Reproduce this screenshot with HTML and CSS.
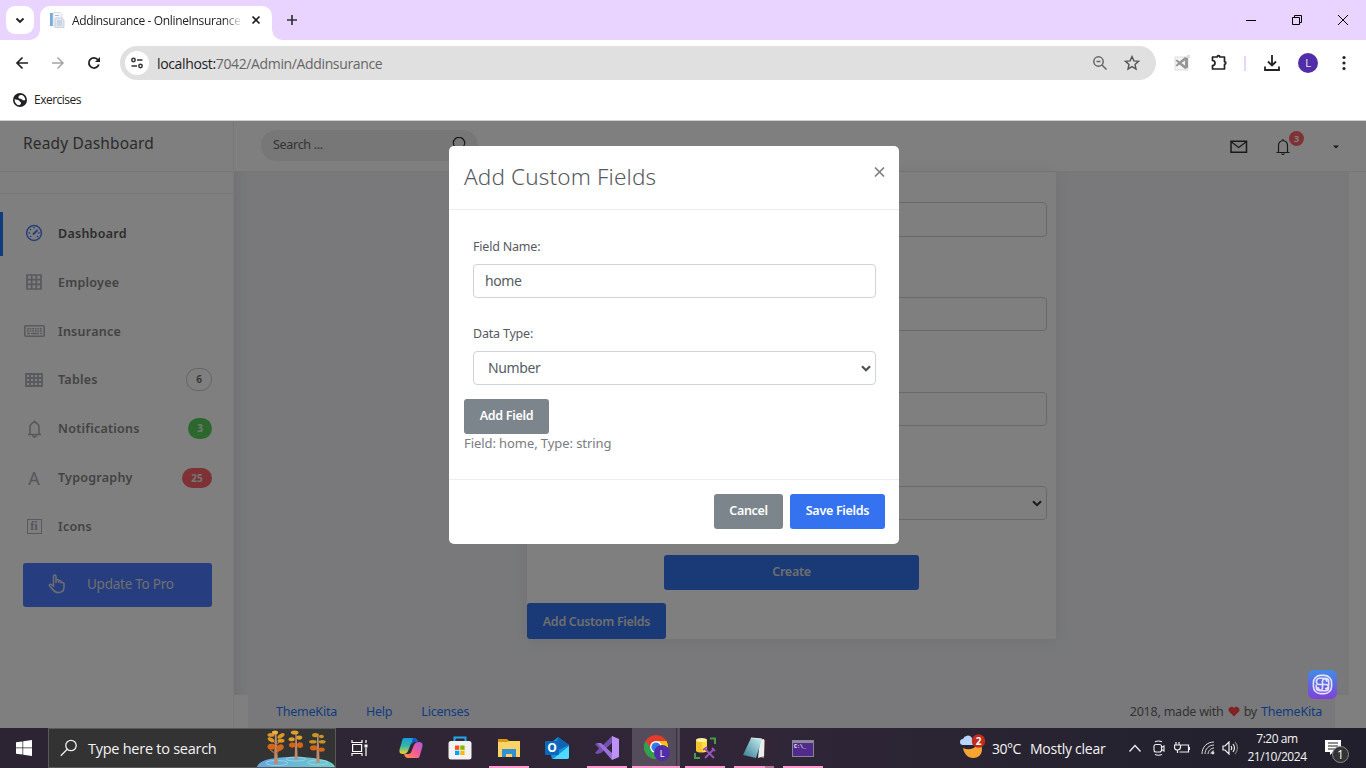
FILE: index.html
```html
<!DOCTYPE html>
<html lang="en">
<head>
<meta charset="utf-8">
<title>Addinsurance - OnlineInsurance</title>
<link rel="stylesheet" href="styles.css">
</head>
<body>
<div class="screen">
  <header class="tabstrip">
    <div class="tab-menu"><svg width="10" height="7" viewBox="0 0 10 7"><path d="M1.500 1.500 5 5l3.500-3.500" fill="none" stroke="#1f1f1f" stroke-width="1.900"/></svg></div>
    <div class="tab">
      <svg class="favicon" width="16" height="16" viewBox="0 0 16 16"><path d="M1 1h3v13H1z" fill="#73addb"/><path d="M4 .5h7l2 2V14H4z" fill="#f3f6fa" stroke="#c9d2de" stroke-width=".7"/><path d="M7 6h6l2 2v7.500H6V7z" fill="#e3e9f2" stroke="#b9c4d4" stroke-width=".7"/><path d="M8 9h5M8 11h5M8 13h5M6 3.500h4" stroke="#b4c0d0" stroke-width="1"/></svg>
      <span class="tab-title">Addinsurance - OnlineInsurance</span>
      <svg class="tab-close" width="10" height="10" viewBox="0 0 10 10"><path d="m1.500 1.500 7 7m0-7-7 7" stroke="#1f1f1f" stroke-width="1.700"/></svg>
    </div>
    <svg class="new-tab" width="12" height="12" viewBox="0 0 12 12"><path d="M6 1v10M1 6h10" stroke="#333" stroke-width="1.700"/></svg>
    <div class="window-buttons">
      <svg width="12" height="12" viewBox="0 0 12 12"><path d="M1 6.500h10" stroke="#000"/></svg>
      <svg width="12" height="12" viewBox="0 0 12 12"><path d="M1.500 3.500h7v7h-7zM3.500 3.500v-2h7v7h-2" fill="none" stroke="#000"/></svg>
      <svg width="12" height="12" viewBox="0 0 12 12"><path d="m1 1 10 10m0-10L1 11" stroke="#000"/></svg>
    </div>
  </header>

  <div class="toolbar">
    <svg class="nav-btn" width="16" height="16" viewBox="0 0 16 16"><path d="M14 8H3m5.500-5.500L3 8l5.500 5.500" fill="none" stroke="#222" stroke-width="1.700"/></svg>
    <svg class="nav-btn" width="16" height="16" viewBox="0 0 16 16"><path d="M2 8h11M7.500 2.500 13 8l-5.500 5.500" fill="none" stroke="#a5a5a5" stroke-width="1.500"/></svg>
    <svg class="nav-btn" width="16" height="16" viewBox="0 0 16 16"><path d="M12.800 9.500A5.100 5.100 0 1 1 12 4.800" fill="none" stroke="#222" stroke-width="1.800"/><path d="M14 2v5H9z" fill="#222"/></svg>
    <div class="omnibox">
      <span class="site-info"><svg width="14" height="14" viewBox="0 0 14 14" fill="none" stroke="#333" stroke-width="1.500"><circle cx="3.500" cy="4" r="1.700"/><path d="M7 4h5.500M1.500 10H7"/><circle cx="10.500" cy="10" r="1.700"/></svg></span>
      <span class="url"><b>localhost:</b>7042/Admin/Addinsurance</span>
      <svg class="zoom-icon" width="16" height="16" viewBox="0 0 16 16" fill="none" stroke="#666" stroke-width="1.500"><circle cx="6.500" cy="6.500" r="4.700"/><path d="m10 10 4.500 4.500M4.500 6.500h4"/></svg>
      <svg width="16" height="16" viewBox="0 0 16 16"><path d="m8 1.600 1.900 4.300 4.600.4-3.500 3.100 1 4.600L8 11.600 4 14l1-4.600-3.500-3.100 4.600-.4z" fill="none" stroke="#555" stroke-width="1.400"/></svg>
    </div>
    <div class="extensions">
      <svg width="16" height="16" viewBox="0 0 16 16"><path d="M1 2h13v13H1z" fill="#f4f4f4" stroke="#ddd"/><path d="M13 0h3v3h-3z" fill="#ddd"/><path d="m11 2 3 1.300v9.400L11 14 5.500 9.500 3 11.500 1.500 10.500 4 8 1.500 5.500 3 4.500l2.500 2zM11 5.500 7.500 8l3.500 2.500z" fill="#969696" fill-rule="evenodd"/></svg>
      <svg width="18" height="18" viewBox="0 0 18 18"><path d="M2.500 3h4.700a1.300 1.300 0 0 1 2.600 0h4.700v4.700a1.300 1.300 0 0 1 0 2.600V15h-12v-3.500a2.500 2.500 0 0 0 0-5z" fill="none" stroke="#222" stroke-width="1.700" stroke-linejoin="round"/></svg>
      <i></i>
      <svg width="18" height="18" viewBox="0 0 18 18"><path d="M9 1v10M5 7.500l4 4 4-4M2 12.500v3.500h14v-3.500" fill="none" stroke="#222" stroke-width="1.800"/></svg>
      <span class="avatar">L</span>
      <svg width="4" height="16" viewBox="0 0 4 16" fill="#222"><circle cx="2" cy="2.500" r="1.600"/><circle cx="2" cy="8" r="1.600"/><circle cx="2" cy="13.500" r="1.600"/></svg>
    </div>
  </div>

  <div class="bookmarks">
    <svg width="14" height="14" viewBox="0 0 14 14"><circle cx="7" cy="7" r="7" fill="#202124"/><path d="M9.500 2.200C7 1.500 5 3 5.500 4.800c.5 1.400 3.500.7 4 2.400h2.800c0-2-.8-4-2.800-5zM1.700 6c1 1.200 3.500.3 4.500 1.800.8 1.500 2 1.200 1.800 2.500C7.800 11.500 7 12 6 12.200 3.500 12 1.500 9.500 1.700 6z" fill="#fff"/></svg>
    <span>Exercises</span>
  </div>

  <main class="viewport">
    <div class="dash">
      <div class="brand">Ready Dashboard</div>
      <div class="topbar">
        <div class="search"><span>Search ...</span><svg width="16" height="16" viewBox="0 0 16 16"><circle cx="7" cy="6" r="5.700" fill="none" stroke="#333" stroke-width="1.200"/><path d="m11 10 3 4" stroke="#333"/></svg></div>
        <div class="top-actions">
          <svg width="18" height="14" viewBox="0 0 18 14"><path d="M1 1.200h15.500v11H1z" fill="none" stroke="#333" stroke-width="1.500"/><path d="m1.500 2 7.200 5.500L16 2" fill="none" stroke="#333" stroke-width="1.200"/></svg>
          <span class="bell"><svg width="14" height="18" viewBox="0 0 14 18"><path d="M.5 14.500h13M2.500 14V7.500C2.500 4.500 4 3 7 2.500c3 .5 4.500 2 4.500 5V14M7 1v2M5.500 15.500q1.500 2 3 0" fill="none" stroke="#333" stroke-width="1.200"/></svg><em>3</em></span>
          <svg class="caret" width="6" height="4" viewBox="0 0 6 4"><path d="M0 .5h6L3 3.500z" fill="#333"/></svg>
        </div>
      </div>
      <aside class="sidebar">
        <div class="user"></div>
        <nav class="menu">
          <div class="item active"><span class="ico"><svg width="18" height="18" viewBox="0 0 18 18" fill="none" stroke="#4d7cfe"><circle cx="9" cy="9" r="7.400" stroke-width="1.500"/><path d="m8 10.500 4.500-4.500" stroke-width="2"/><path d="M9 3v1.500M3.500 9H5m8 0h1.500M5 5l1 1M5 13l1-1m7 1-1-1" stroke-width="1.300"/></svg></span><span>Dashboard</span></div>
          <div class="item"><span class="ico"><svg width="16" height="16" viewBox="0 0 16 16"><path d="M1 1h14v14H1zM1 5.700h14M1 10.300h14M5.700 1v14M10.300 1v14" fill="none" stroke="#b2b4ba" stroke-width="1.700"/></svg></span><span>Employee</span></div>
          <div class="item"><span class="ico wide"><svg width="21" height="12" viewBox="0 0 21 12"><rect x=".8" y=".8" width="19.400" height="10.400" rx="1" fill="none" stroke="#b2b4ba" stroke-width="1.600"/><path d="M3 3.700h15M3 6h15" stroke="#b2b4ba" stroke-width="1.500" stroke-dasharray="1.800 .8"/><path d="M3 8.500h3m1 0h8m1 0h2" stroke="#b2b4ba" stroke-width="1.400"/></svg></span><span>Insurance</span></div>
          <div class="item"><span class="ico"><svg width="18" height="14" viewBox="0 0 18 14"><path d="M1 1h16v12H1zM1 5h16M1 9h16M5 1v12M9 1v12M13 1v12" fill="none" stroke="#b2b4ba" stroke-width="1.800"/></svg></span><span>Tables</span><em class="pill outline">6</em></div>
          <div class="item"><span class="ico"><svg width="15" height="18" viewBox="0 0 14 18"><path d="M.5 14.500h13M2.500 14V7.500C2.500 4.500 4 3 7 2c3 1 4.500 2.500 4.500 5.500V14M7 .5v2M5 15.500q2 3 4 0" fill="none" stroke="#aaadb4" stroke-width="1.500"/></svg></span><span>Notifications</span><em class="pill green">3</em></div>
          <div class="item"><span class="ico letter">A</span><span>Typography</span><em class="pill red">25</em></div>
          <div class="item"><span class="ico"><span class="fi">fi</span></span><span>Icons</span></div>
        </nav>
        <div class="pro"><svg width="18" height="20" viewBox="0 0 18 20"><path d="M5.500 12V2.500c0-2 2.500-2 2.500 0V9V6.500c0-1.500 2.500-1.500 2.500 0V9 7.500c0-1.500 2.500-1.500 2.500 0V9.500c0-1.500 3-1.500 3 0V13c0 3-1.500 5.500-5.500 5.500-3 0-4.500-1-6-3.500L1.700 12c-1-1.500.8-2.500 2-1.200z" fill="none" stroke="#ddd" stroke-width="1.500"/></svg><span>Update To Pro</span></div>
      </aside>
      <section class="content">
        <div class="card">
          <div class="control"></div><div class="control"></div><div class="control"></div>
          <div class="control select"><svg width="10" height="7" viewBox="0 0 10 7"><path d="m1 1.200 4 4 4-4" fill="none" stroke="#333" stroke-width="2"/></svg></div>
          <div class="btn create">Create</div>
          <div class="btn custom">Add Custom Fields</div>
        </div>
      </section>
      <footer class="footer">
        <a>ThemeKita</a><a>Help</a><a>Licenses</a>
        <p>2018, made with <svg width="12" height="11" viewBox="0 0 12 11"><path d="M6 10.500 1 5.600C-1 2.500 3.500-1.500 6 2c2.500-3.500 7 .5 5 3.600z" fill="#ff4646"/></svg> by <a>ThemeKita</a></p>
      </footer>
    </div>
    <div class="backdrop"></div>
    <div class="modal">
      <div class="modal-head"><h2>Add Custom Fields</h2><svg width="12" height="12" viewBox="0 0 12 12"><path d="m2 1.500 9 9m0-9-9 9" stroke="#7f7f7f" stroke-width="1.700"/></svg></div>
      <div class="modal-body">
        <div class="group"><label class="l1">Field Name:</label><div class="field"><span class="v1">home</span></div></div>
        <div class="group"><label class="l2">Data Type:</label><div class="field pick"><span class="v2">Number</span><svg width="10" height="7" viewBox="0 0 10 7"><path d="m1 1.200 4 4 4-4" fill="none" stroke="#495057" stroke-width="2.200"/></svg></div></div>
        <div class="btn grey add">Add Field</div>
        <p class="result">Field: home, Type: string</p>
      </div>
      <div class="modal-foot"><div class="btn grey cancel">Cancel</div><div class="btn blue save">Save Fields</div></div>
    </div>
    <div class="assistant"><svg width="21" height="21" viewBox="0 0 22 22" fill="none" stroke="#e4e2ff" stroke-width="1.700"><rect x="1.500" y="1.500" width="19" height="19" rx="7.500"/><g id="petal"><path d="M11 11H7.500C3.500 11 3.500 4.500 8 4.500h3c3 0 4.500 1.500 4.500 4"/></g><path d="M11 11V7.500C11 3.500 17.500 3.500 17.500 8v3c0 3-1.500 4.500-4 4.500M11 11h3.500c4 0 4 6.500-.5 6.500h-3c-3 0-4.500-1.500-4.500-4M11 11v3.500c0 4-6.500 4-6.500-.5v-3"/></svg></div>
  </main>

  <footer class="taskbar">
    <div class="start"><svg width="16" height="16" viewBox="0 0 16 16" fill="#fff"><path d="M0 2.300 6.500 1.400v6.200H0zM7.200 1.300 16 0v7.600H7.200zM0 8.300h6.500v6.300L0 13.700zM7.200 8.300H16V16l-8.800-1.300z"/></svg></div>
    <div class="task-search">
      <svg width="18" height="18" viewBox="0 0 18 18" fill="none" stroke="#eee" stroke-width="1.300"><circle cx="11" cy="6.500" r="5.200"/><path d="m7.300 10.300-6.500 6.500"/></svg>
      <span>Type here to search</span>
      <svg class="trees" width="78" height="38" viewBox="0 0 78 38">
        <defs><linearGradient id="lake"><stop offset="0" stop-color="#65a7df"/><stop offset="1" stop-color="#6dccc9"/></linearGradient></defs>
        <path d="M0 38c2-8 20-10 39-10s37 3 39 10z" fill="url(#lake)"/>
        <g fill="none" stroke="#a3d5ea" stroke-width=".8"><ellipse cx="20" cy="34" rx="11" ry="2.500"/><ellipse cx="39" cy="30" rx="10" ry="2"/><ellipse cx="61" cy="33.500" rx="10" ry="2.500"/></g>
        <g transform="translate(-1 1) scale(1 .98)"><path d="M18 35 19 3h1.500l1.500 32z" fill="#b98c72"/><path d="M19 24l-5-4m6-5 6-5m-6 14 6-6m-7-5-6-5" stroke="#a96c3d" stroke-width="1.300"/><g fill="#dc9622"><ellipse cx="15" cy="5" rx="3.500" ry="2"/><ellipse cx="25" cy="6" rx="4" ry="2" transform="rotate(-35 25 6)"/><ellipse cx="15" cy="10" rx="3.600" ry="2" transform="rotate(30 15 10)"/><ellipse cx="25" cy="11" rx="3.500" ry="2"/></g><g fill="#d56618"><ellipse cx="15.500" cy="17" rx="4" ry="3"/><ellipse cx="24" cy="18" rx="4" ry="3" transform="rotate(-35 24 18)"/></g><ellipse cx="19" cy="2.500" rx="3" ry="2" fill="#f4b03d"/></g>
        <g transform="translate(24 1) scale(.76 .84)"><path d="M18 35 19 3h1.500l1.500 32z" fill="#b98c72"/><g fill="#dda12b"><ellipse cx="18" cy="3" rx="5" ry="2.500"/><ellipse cx="24" cy="9" rx="4" ry="2.500"/><ellipse cx="14" cy="11" rx="4" ry="2.500"/></g><g fill="#d56618"><ellipse cx="15" cy="18" rx="4.500" ry="3"/><ellipse cx="25" cy="18" rx="4" ry="3.500"/></g></g>
        <g transform="translate(44 3) scale(.85 .88)"><path d="M18 35 19 3h1.500l1.500 32z" fill="#b98c72"/><g fill="#c99522"><ellipse cx="17" cy="3.500" rx="4" ry="2.500"/><ellipse cx="24" cy="5" rx="3" ry="2"/><ellipse cx="14" cy="11" rx="4.500" ry="2"/><ellipse cx="25" cy="11" rx="4" ry="2"/></g><g fill="#d56618"><ellipse cx="15" cy="18" rx="4.500" ry="3"/><ellipse cx="24" cy="20" rx="4" ry="2.500"/></g></g>
      </svg>
    </div>
    <div class="apps">
      <div class="app taskview"><svg width="17" height="16" viewBox="0 0 17 16" fill="none" stroke="#fff" stroke-width="1.200"><path d="M1 0v2.500h10V0M1 16v-2.500h10V16M1.600 4.500h9v7h-9zM15 0v3M15 8v8"/><path d="M13.500 4.500h3v3h-3z" fill="#fff" stroke="none"/></svg></div>
      <div class="app"><svg width="24" height="22" viewBox="0 0 24 22"><defs><linearGradient id="cp1" x1="0" y1="0" x2="0" y2="1"><stop offset="0" stop-color="#159edf"/><stop offset=".5" stop-color="#32b7a4"/><stop offset="1" stop-color="#f8d32e"/></linearGradient><linearGradient id="cp2" x1="1" y1="0" x2="0" y2="1"><stop offset="0" stop-color="#a75be0"/><stop offset=".5" stop-color="#f25b98"/><stop offset="1" stop-color="#ff963f"/></linearGradient></defs><path d="M5 1h10c2 0 3 1 4 4h-4c-2 0-3 1-4 4l-2 5c-1 2-2 3-5 3-4 0-4-3-3-6l2-7c.5-2 1-3 2-3z" fill="url(#cp1)"/><path d="M14 1c3 0 4 1 5 4h-4L12 8z" fill="#1757c6"/><path d="M19 21H9c-2 0-3-1-4-4h4c2 0 3-1 4-4l2-5c1-2 2-3 5-3 4 0 4 3 3 6l-2 7c-.5 2-1 3-2 3z" fill="url(#cp2)"/></svg></div>
      <div class="app"><svg width="24" height="24" viewBox="0 0 24 24"><path d="M6.500 6V1.500h11V6" fill="none" stroke="#25a9ed" stroke-width="2"/><rect x=".5" y="5" width="23" height="18.500" rx="2.500" fill="#f2f2f2"/><path d="M7 9.500h4.300v4.300H7z" fill="#f25022"/><path d="M12.300 9.500h4.300v4.300h-4.300z" fill="#7fba00"/><path d="M7 14.700h4.300V19H7z" fill="#00a4ef"/><path d="M12.300 14.700h4.300V19h-4.300z" fill="#ffb900"/></svg></div>
      <div class="app open"><svg width="22" height="20" viewBox="0 0 22 20"><path d="M0 1h9l2 2h11v5H0z" fill="#d79a0e"/><path d="M0 4h9l2-1h11v16H0z" fill="#fbd467"/><path d="M4 19v-8h14v8h-4v-3H8v3z" fill="#338fd3"/></svg></div>
      <div class="app"><svg width="25" height="24" viewBox="0 0 25 24"><path d="M3 9 13 1l11 8v12a2 2 0 0 1-2 2H7z" fill="#1490df"/><path d="M13 1 24 9 11 15z" fill="#1063b1"/><path d="m24 10-16 13h14a2 2 0 0 0 2-2z" fill="#50d9ff"/><rect y="5" width="14" height="14" rx="1" fill="#0c68bd"/><text x="7" y="16.300" class="outlook">O</text></svg></div>
      <div class="app open"><svg width="24" height="24" viewBox="0 0 24 24"><path d="M0 8l2-1 4 4L17 0v7L6 17l-4 1-2-1z" fill="#7450ae"/><path d="M2 7 17 24v-7L6 7z" fill="#9b70dc"/><path d="M0 8v9l4-4.500z" fill="#302637"/><path d="m17 0 7 3v18l-7 3z" fill="#bd91f6"/></svg></div>
      <div class="app current"><svg width="26" height="26" viewBox="0 0 26 26"><circle cx="12" cy="12" r="12" fill="#e33b2e"/><path d="M1.600 6A12 12 0 0 0 12 24l4-8-8-1z" fill="#30a24c"/><path d="M12 24A12 12 0 0 0 22.400 6H12l5 9z" fill="#fbc116"/><circle cx="12" cy="12" r="6" fill="#fff"/><circle cx="12" cy="12" r="4.600" fill="#317be7"/><circle cx="18" cy="18" r="8" fill="#512da8"/><text x="18" y="21.500" class="badge-l">L</text></svg></div>
      <div class="app open"><svg width="22" height="23" viewBox="0 0 22 23"><path d="M2 3v11c2 2 9 2 11 0V3z" fill="#f5c52b"/><path d="M8 3h5v12H8z" fill="#ffe044"/><ellipse cx="7.500" cy="3" rx="5.500" ry="2" fill="#fff1a7"/><path d="M16 1.500h5V7M1 16v5h5" fill="none" stroke="#439c4b" stroke-width="2"/><path d="m11 12 9 9M20 12l-9 9M9 13l4-3M18 11l3 3" stroke="#9b55b8" stroke-width="1.800"/></svg></div>
      <div class="app open more"><svg width="24" height="22" viewBox="0 0 24 22"><defs><linearGradient id="note" x1="0" y1="1" x2="1" y2="0"><stop stop-color="#327b8c"/><stop offset="1" stop-color="#c9f1f5"/></linearGradient></defs><path d="m19 2 4 1-1 18-4-1z" fill="#b69768"/><path d="m18 3 4-1v17l-6 2z" fill="#e8edef"/><path d="M9 1 20 2 14 21 1 18z" fill="url(#note)"/><path d="M9 1 20 2" stroke="#eee"/></svg></div>
      <div class="app open"><svg width="22" height="17" viewBox="0 0 22 17"><rect x=".5" y=".5" width="21" height="16" fill="#512b8c" stroke="#8b8495"/><path d="M1 1h20v2H1z" fill="#9088a0"/><text x="2" y="7.500" class="cmd">C:\_</text></svg></div>
    </div>
    <div class="tray">
      <svg class="weather" width="26" height="26" viewBox="0 0 26 26"><path d="M3 14c7 3 14 0 15-6 6 3 6 16-5 16-5 0-9-4-10-10z" fill="#f6a432"/><path d="M3 11a3 3 0 0 1 0-6 5 5 0 0 1 9-1l1 7z" fill="#b9d5fb"/><circle cx="18.500" cy="7" r="6.700" fill="#c42b1c"/><text x="18.500" y="11" class="num">2</text></svg>
      <span class="temp">30°C</span><span class="sky">Mostly clear</span>
      <svg class="chev" width="14" height="9" viewBox="0 0 14 9"><path d="m1.500 7.500 5.500-6 5.500 6" fill="none" stroke="#eee" stroke-width="1.300"/></svg>
      <svg class="meet" width="12" height="16" viewBox="0 0 12 16" fill="none" stroke="#eee" stroke-width="1.100"><rect x="1" y="4.500" width="7.500" height="7.500" rx="2"/><path d="M8.500 7.500l2.500-1.500v5L8.500 9.500M2 1.700q3.500-1.500 7 0M2 14.500q3.500 1.500 7 0"/></svg>
      <svg class="batt" width="16" height="14" viewBox="0 0 16 14" fill="none" stroke="#eee" stroke-width="1.200"><path d="M6.500 4h8v7h-9M15.500 6v3M2 1v3m3-3v3M.5 4h6v2c0 2-1 3-3 3s-3-1-3-3zM3.500 9v3"/></svg>
      <svg class="wifi" width="14" height="14" viewBox="0 0 14 14" fill="none" stroke="#ddd"><path d="M1 13C1 6 6 1 13 1M4 13c0-5 4-9 9-9M7 13c0-3 3-6 6-6M10 13c0-2 1-3 3-3"/><circle cx="12" cy="12" r="1" fill="#fff"/></svg>
      <svg class="vol" width="17" height="14" viewBox="0 0 17 14" fill="none" stroke="#eee" stroke-width="1.200"><path d="M1 5h2l4-4v12L3 9H1zM9 5q1.500 2 0 4M11 3q3 4 0 8"/><path d="M13 1q5 6 0 12" stroke="#777"/></svg>
      <div class="clock"><span>7:20 am</span><span class="date">21/10/2024</span></div>
      <svg class="notice" width="26" height="26" viewBox="0 0 26 26"><path d="M1 3h16v12H9l-3 3v-3H1z" fill="#fff"/><path d="M4 6h10M4 9h10M4 12h7" stroke="#222"/><circle cx="16.500" cy="17.500" r="8" fill="#333" stroke="#8b8b8f"/><text x="16.500" y="22" class="num thin">1</text></svg>
    </div>
  </footer>
</div>
</body>
</html>
```
FILE: styles.css
```css
* { box-sizing: border-box; }
body { margin: 0; overflow: hidden; font-family: "Open Sans", "Noto Sans", sans-serif; }
svg { display: block; flex: none; }
em { font-style: normal; }
p, h2 { margin: 0; }
.screen { width: 1366px; height: 768px; display: flex; flex-direction: column; background: #fff; overflow: hidden; white-space: nowrap; }

/* Browser chrome */
.tabstrip { height: 40px; background: #e8d4ff; display: flex; align-items: center; flex: none; }
.tab-menu { width: 28px; height: 28px; margin-left: 6px; border-radius: 9px; background: #fff; display: grid; place-items: center; }
.tab { width: 232px; height: 34px; margin: 6px 0 0 6px; padding: 0 11px 6px 9px; background: #fff; border-radius: 10px 10px 0 0; display: flex; align-items: center; position: relative; }
.tab::before, .tab::after { content: ""; position: absolute; bottom: 0; width: 10px; height: 10px; }
.tab::before { left: -10px; background: radial-gradient(circle at 0 0, transparent 9.500px, #fff 10px); }
.tab::after { right: -10px; background: radial-gradient(circle at 100% 0, transparent 9.500px, #fff 10px); }
.tab-title { width: 168px; margin-left: 7px; font-size: 12px; letter-spacing: -.36px; color: #222; -webkit-mask-image: linear-gradient(90deg, #000 90%, rgba(0,0,0,.15)); }
.tab-close { margin-left: 11px; }
.new-tab { margin-left: 14px; }
.window-buttons { margin-left: auto; display: flex; gap: 34px; margin-right: 17px; }
.toolbar { height: 46px; flex: none; display: flex; align-items: center; padding-left: 14px; }
.nav-btn { margin-right: 20px; }
.nav-btn + .nav-btn + .nav-btn { margin-right: 18px; }
.omnibox { width: 1036px; height: 34px; border-radius: 17px; background: #e0e0e0; display: flex; align-items: center; padding: 0 16px 0 5px; }
.site-info { width: 24px; height: 24px; border-radius: 50%; background: #fff; display: grid; place-items: center; }
.url { margin-left: 8px; font-size: 14px; letter-spacing: -.36px; color: #666; }
.url b { font-weight: 400; color: #222; }
.zoom-icon { margin-left: auto; margin-right: 16px; }
.extensions { flex: 1; display: flex; align-items: center; padding-left: 18px; }
.extensions > :nth-child(2) { margin-left: 20px; }
.extensions i { width: 2px; height: 15px; background: #e8d4ff; margin: 0 17px 0 16px; }
.avatar { width: 20px; height: 20px; border-radius: 50%; background: #512da8; color: #eee; font-size: 11px; line-height: 20px; text-align: center; margin: 0 24px 0 17px; }
.bookmarks { height: 35px; flex: none; border-bottom: 1px solid #cfd1ce; display: flex; gap: 7px; padding: 7px 0 0 13px; }
.bookmarks span { font-size: 12px; line-height: 14px; letter-spacing: -.5px; color: #222; }

/* Dashboard */
.viewport { height: 607px; flex: none; position: relative; overflow: hidden; font-family: "Noto Sans", sans-serif; }
.dash { height: 607px; display: grid; grid-template-columns: 234px 1fr; grid-template-rows: 51px 523px 33px; background: #fff; }
.brand { border-right: 1px solid #eee; border-bottom: 1px solid #eee; padding: 10px 0 0 23px; font-size: 15.500px; line-height: 24px; color: #575757; letter-spacing: .15px; }
.topbar { border-bottom: 1px solid #eee; display: flex; justify-content: space-between; padding: 9px 27px 0 27px; }
.search { width: 217px; height: 31px; border-radius: 16px; background: #eee; padding: 0 10px 2px 12px; display: flex; justify-content: space-between; align-items: center; font-size: 12.500px; letter-spacing: -.3px; color: #666; }
.top-actions { display: flex; align-items: flex-start; padding-top: 10px; }
.bell { position: relative; margin: -2px 43px 0 28px; }
.bell em { position: absolute; left: 13px; top: -7px; width: 15px; height: 15px; border-radius: 50%; background: #ff646d; color: #fff; font-size: 9px; font-weight: 700; line-height: 15px; text-align: center; }
.caret { margin-top: 5px; }
.sidebar { grid-row: 2 / 4; border-right: 1px solid #f4f4f4; }
.user { height: 22px; border-bottom: 1px solid #eee; }
.menu { padding-top: 15px; }
.item { height: 48.850px; display: flex; align-items: center; padding: 0 21px 0 23px; font-size: 12.500px; font-weight: 600; letter-spacing: .25px; color: #868686; position: relative; }
.active { color: #5a5a5a; }
.active::before { content: ""; position: absolute; left: 0; top: 3px; width: 3px; height: 44px; background: #1d78ff; }
.ico { width: 22px; margin-right: 13px; display: grid; place-items: center; }
.letter { font-size: 18px; font-weight: 400; color: #aaadb4; line-height: 20px; letter-spacing: 0; }
.fi { border: 1.500px solid #b2b4ba; width: 15px; height: 15px; font: 700 12px/13px "Liberation Serif", serif; text-align: center; color: #aaadb4; letter-spacing: 0; }
.pill { margin-left: auto; border-radius: 11px; color: #eee; font-size: 10px; font-weight: 700; line-height: 20px; height: 20px; width: 30px; text-align: center; letter-spacing: 0; }
.outline { border: 1px solid #ccc; color: #777; width: 26px; height: 23px; line-height: 21px; }
.green { background: #59d05d; width: 24px; height: 21px; }
.red { background: #ff646d; margin-top: 1px; }
.pro { width: 189px; height: 44px; margin: 12px 0 0 23px; border-radius: 3px; background: #4d7cfe; display: flex; align-items: center; padding: 0 0 1px 25px; gap: 21px; font-size: 13.500px; letter-spacing: -.25px; color: #ddd; }
.content { background: #f2f3f6; margin-right: 17px; padding: 0 293px; box-shadow: inset 12px 0 14px -10px #d9dbe0; }
.card { width: 529px; height: 467px; background: #fff; box-shadow: 0 1px 15px 1px rgba(69,65,78,.08); padding: 30px 9px 0; }
.control { height: 35px; border: 1px solid #ced4da; border-radius: 4px; margin-bottom: 60px; }
.control:nth-child(n+2) { height: 34px; }
.control:nth-child(2) { margin-bottom: 61px; }
.select { display: flex; justify-content: flex-end; align-items: center; padding-right: 4px; margin-bottom: 35px; }
.btn { border-radius: 3px; display: grid; place-items: center; color: #fff; font-size: 12.500px; font-weight: 600; letter-spacing: -.3px; padding-bottom: 2px; }
.create { width: 255px; height: 35px; margin: 0 auto 13px 128px; background: #3572ee; color: #ddd; }
.custom { width: 139px; height: 36px; margin-left: -9px; background: #3572ee; color: #ddd; padding-bottom: 0; }
.footer { margin: 0 31px 0 14px; padding: 0 13px 1px 28px; background: #f2f3f6; display: flex; align-items: center; gap: 29px; font-size: 12.500px; letter-spacing: -.22px; color: #666; }
.footer a { color: #1d78ff; }
.footer p { margin-left: auto; display: flex; gap: 4px; align-items: center; }
.backdrop { position: absolute; inset: 0; background: rgba(0,0,0,.5); }

/* Custom field dialog */
.modal { position: absolute; left: 449px; top: 25px; width: 450px; height: 398px; border-radius: 5px; background: #fff; display: flex; flex-direction: column; color: #575962; }
.modal-head { height: 64px; border-bottom: 1px solid #ebedf0; padding: 15px 14px 0 15px; display: flex; justify-content: space-between; }
.modal-head h2 { font-size: 22.500px; line-height: 31px; font-weight: 300; letter-spacing: .15px; }
.modal-head svg { margin-top: 5px; }
.modal-body { height: 270px; border-bottom: 1px solid #ebedf0; padding: 25px 15px 0; }
.group { margin: 0 8px 0 9px; height: 87px; }
.group label { display: block; height: 29px; font-size: 12.500px; line-height: 24px; letter-spacing: -.2px; }
.field { height: 34px; border: 1px solid #ced4da; border-radius: 4px; padding: 0 11px; display: flex; align-items: center; font-size: 14px; letter-spacing: -.4px; color: #555c63; }
.field span { margin-top: -2px; }
.pick { padding: 0 4px 0 14px; justify-content: space-between; }
.group + .group { height: 77px; }
.grey { background: #7c858c; }
.blue { background: #3572f0; }
.add { width: 85px; height: 35px; }
.result { font-size: 13px; line-height: 18px; letter-spacing: -.08px; color: #7b7c82; }
.modal-foot { display: flex; justify-content: flex-end; gap: 7px; padding: 14px 14px 0; }
.modal-foot .btn { height: 35px; }
.cancel { width: 69px; }
.save { width: 95px; }
.assistant { position: absolute; left: 1308px; top: 549px; width: 29px; height: 29px; border-radius: 6px; background: linear-gradient(#418ce7, #8141d8); display: grid; place-items: center; }

/* Windows taskbar */
.taskbar { height: 40px; flex: none; display: flex; color: #f4f4f4; background: linear-gradient(90deg, #2d2433, #302637 55%, #24222f 85%, #211f2c); }
.start { width: 48px; display: grid; place-items: center; }
.task-search { width: 288px; background: #333; border: 1px solid #595959; display: flex; align-items: center; padding-left: 11px; font-size: 14.500px; }
.task-search span { margin-left: 10px; letter-spacing: -.26px; }
.trees { margin-left: auto; }
.apps { display: flex; }
.app { width: 49px; display: grid; place-items: center; position: relative; }
.taskview { width: 50px; padding-right: 3px; }
.open::after, .current::after { content: ""; position: absolute; left: 5px; bottom: 0; width: 40px; height: 2px; background: #ff9ad0; }
.current { background: linear-gradient(90deg, #554c5b 44px, #39313f 44px 45px, #554c5b 45px); margin-left: 1px; width: 48px; padding-left: 1px; }
.current::after { left: 0; width: 48px; }
.more::after { background: linear-gradient(90deg, #ff9ad0 31px, #b77597 31px); }
.outlook { font: 700 12px "Open Sans", sans-serif; fill: #fff; text-anchor: middle; }
.badge-l { font: 9px "Open Sans", sans-serif; fill: #fff; text-anchor: middle; }
.cmd { font: 700 5px "Liberation Mono", monospace; fill: #fff; }
.num { font: 700 10px "Open Sans", sans-serif; fill: #fff; text-anchor: middle; }
.thin { font-weight: 400; font-size: 12px; }
.tray { margin-left: auto; width: 406px; display: flex; align-items: center; font-size: 14px; }
.weather { margin-top: -3px; }
.temp { margin-left: 6px; width: 38px; letter-spacing: -.5px; }
.sky { width: 75px; letter-spacing: -.25px; }
.chev { margin-left: 23px; }
.meet { margin-left: 11px; }
.batt { margin-left: 9px; }
.wifi { margin-left: 11px; }
.vol { margin-left: 7px; }
.clock { width: 60px; margin-left: 8px; display: flex; flex-direction: column; align-items: center; font-size: 12px; line-height: 18px; letter-spacing: -.45px; }
.notice { margin: 4px 0 0 17px; }
```
